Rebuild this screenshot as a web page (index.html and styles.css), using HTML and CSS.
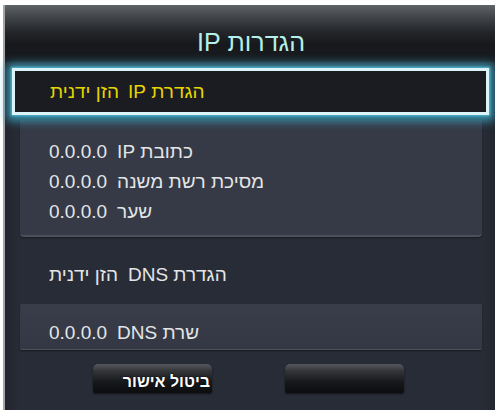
FILE: index.html
```html
<!DOCTYPE html>
<html lang="he">
<head>
<meta charset="utf-8">
<title>הגדרות IP</title>
<link rel="stylesheet" href="styles.css">
</head>
<body>
<div class="panel">
  <div class="header">
    <div class="title" dir="rtl">הגדרות IP</div>
  </div>
  <div class="selected">
    <div class="row sel-row" dir="rtl"><span>הגדרת IP</span><span>הזן ידנית</span></div>
  </div>
  <div class="group">
    <div class="row" dir="rtl"><span>כתובת IP</span><span>0.0.0.0</span></div>
    <div class="row" dir="rtl"><span>מסיכת רשת משנה</span><span>0.0.0.0</span></div>
    <div class="row" dir="rtl"><span>שער</span><span>0.0.0.0</span></div>
  </div>
  <div class="row dns-mode" dir="rtl"><span>הגדרת DNS</span><span>הזן ידנית</span></div>
  <div class="group dns-box">
    <div class="row" dir="rtl"><span>שרת DNS</span><span>0.0.0.0</span></div>
  </div>
  <div class="buttons">
    <div class="btn"><span class="btn-label" dir="rtl">ביטול אישור</span></div>
    <div class="btn"></div>
  </div>
</div>
</body>
</html>
```

FILE: styles.css
```css
html, body {
  margin: 0;
  padding: 0;
  background: #ffffff;
}

body {
  font-family: "Liberation Sans", Arial, sans-serif;
  width: 495px;
  height: 410px;
  overflow: hidden;
}

.panel {
  margin: 5px 0 0 3px;
  height: 405px;
  box-sizing: border-box;
  border-left: 2px solid #a3a5a9;
  background: linear-gradient(to right, #22252d 0px, #282c36 14px, #282c36 478px, #23262e 100%);
  display: flex;
  flex-direction: column;
}

.header {
  height: 57px;
  flex: none;
  background: linear-gradient(to bottom, #5f6267 0px, #3d4044 14px, #222428 28px, #16181b 40px, #1a1c20 57px);
  display: flex;
  justify-content: center;
  align-items: flex-start;
  padding-top: 23px;
  box-sizing: border-box;
}

.title {
  color: #b4efe9;
  font-size: 25px;
  line-height: 28px;
  padding-left: 2px;
}

.selected {
  margin: 6px 6px 0 7px;
  height: 47px;
  box-sizing: border-box;
  border: 3px solid #dcf4f7;
  background: #1b1c22;
  box-shadow: 0 1px 9px 5px rgba(60, 172, 204, 0.8), 0 0 2px 1px rgba(130, 215, 235, 0.9);
  display: flex;
  align-items: center;
  padding-left: 35px;
  position: relative;
  z-index: 1;
}

.row {
  display: flex;
  justify-content: flex-end;
  align-items: center;
  gap: 10px;
  height: 30px;
  color: #e4e5e7;
  font-size: 19px;
  white-space: nowrap;
}

.sel-row {
  color: #e6d600;
  gap: 9px;
}

.group {
  margin: 5px 13px 0 15px;
  background: #363a46;
  border-radius: 0 0 4px 4px;
  border-bottom: 2px solid #4c505c;
  box-shadow: 0 1px 2px rgba(0, 0, 0, 0.4);
  padding: 17px 0 8px 29px;
  height: 117px;
  box-sizing: border-box;
}

.dns-mode {
  margin-top: 23px;
  padding-left: 44px;
}

.dns-box {
  margin-top: 14px;
  height: 46px;
  padding: 14px 0 0 29px;
  border-radius: 2px;
  border-bottom: 1px solid #4c505c;
  background: linear-gradient(to bottom, #393d49, #343844);
}

.buttons {
  margin: 14px 0 0 88px;
  display: flex;
  gap: 73px;
}

.btn {
  width: 119px;
  height: 29px;
  border-radius: 5px 5px 2px 2px;
  background: linear-gradient(to bottom, #55585d 0px, #333539 7px, #17181b 18px, #0c0d0f 29px);
  box-shadow: 0 1px 2px rgba(0, 0, 0, 0.6);
  display: flex;
  justify-content: flex-end;
  align-items: center;
}

.btn-label {
  color: #ffffff;
  font-weight: bold;
  font-size: 16px;
  margin-right: 2px;
  margin-top: 6px;
  text-shadow: 0 0 2px #000;
}
```
